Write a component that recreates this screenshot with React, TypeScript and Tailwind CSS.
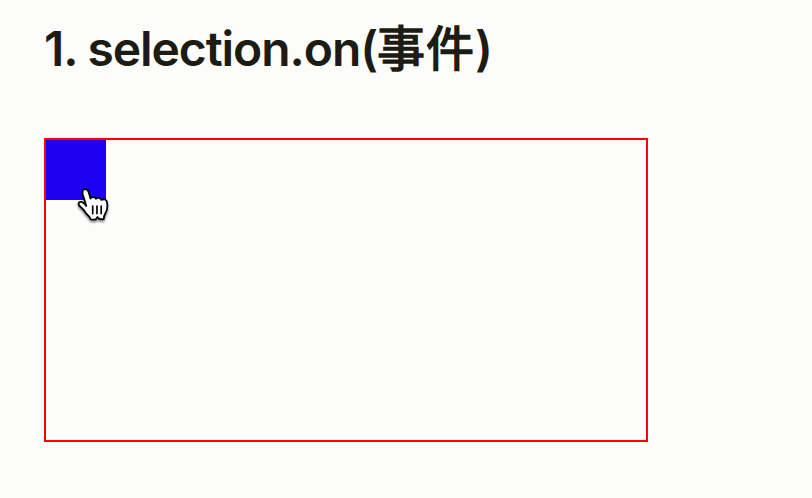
export default function App() {
  return (
    <main className="h-[498px] w-full overflow-hidden bg-[#fcfcfa] pl-11 pt-4">
      <h1 className="h-[58px] whitespace-nowrap font-['Inter','Noto_Sans_CJK_SC',sans-serif] text-[48px] font-semibold leading-[58px] tracking-[-1.08px] text-[#1c1c14]">
        1. selection.on(<span className="font-['Noto_Sans_CJK_SC',sans-serif] font-normal tracking-[1px] [-webkit-text-stroke:1.5px_#1c1c14]">事件</span>)
      </h1>
      <div className="relative mt-16 h-[304px] w-[604px] border-2 border-[#fe0000]">
        <div className="size-[60px] bg-[#1d00ef]" />
        <svg
          className="absolute left-[30px] top-[46px] overflow-visible drop-shadow-[0_2px_1px_rgba(0,0,0,0.45)]"
          width="36"
          height="37"
          viewBox="0 0 34 36"
          preserveAspectRatio="none"
        >
          <path
            d="M9.7 19.5 L6.5 8.5 C5.8 5.8 6.2 3.4 8.2 3 C10.2 2.6 11.4 4 12 6.1 L13.7 12.3 C13.8 10.6 18.1 10.3 18.8 12.5 C19.6 10.8 23.3 11.2 24 13.5 C26.4 12.1 28.9 13.3 29.3 16 C29.9 20 29.8 23.4 27.9 26.2 C26.8 28 26.2 29.4 26.2 32.2 L22.3 32.2 L20.3 30.2 L18.6 32.6 L13.8 32.5 C13.3 29.9 10.7 28.4 9.1 26 C7.2 23 6.2 21.8 4.4 20.4 C2.2 18.7 1.7 16.5 3.5 15.7 C5.7 14.8 7.8 16.7 9.7 19.5 Z"
            fill="#fcfcff"
            stroke="#050505"
            strokeWidth="1.7"
            strokeLinejoin="round"
          />
          <path
            d="M15.8 19.5 V27 M19.8 19.5 V27 M23.8 19.5 V27"
            stroke="#050505"
            strokeWidth="1.6"
            strokeLinecap="round"
          />
        </svg>
      </div>
    </main>
  );
}
